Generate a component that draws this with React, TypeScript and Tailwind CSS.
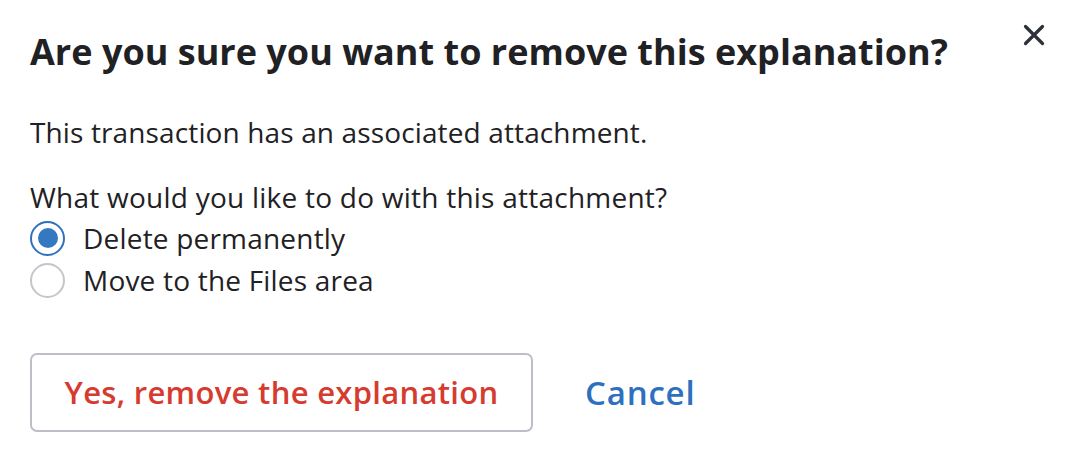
import { useState } from "react";

const font = { fontFamily: '"Open Sans", "Noto Sans", sans-serif' };

export default function App() {
  const [choice, setChoice] = useState("delete");

  const options = [
    { id: "delete", label: "Delete permanently" },
    { id: "move", label: "Move to the Files area" },
  ];

  return (
    <div className="w-[1076px] h-[460px] bg-white text-[#1f2124] relative overflow-hidden" style={font}>
      {/* close */}
      <button className="absolute left-[1022px] top-[23px] w-6 h-6 flex items-center justify-center" aria-label="Close">
        <svg width="22" height="22" viewBox="0 0 22 22" fill="none">
          <path d="M2.5 2.5L19.5 19.5M19.5 2.5L2.5 19.5" stroke="#2b3136" strokeWidth="3.2" strokeLinecap="round" />
        </svg>
      </button>

      <div className="pl-[30px] pt-[30px]">
        <h1 className="text-[36px] leading-[44px] font-bold tracking-[0.02px]">
          Are you sure you want to remove this explanation?
        </h1>

        <p className="mt-[40px] text-[28px] leading-[36px] tracking-[0.13px]">
          This transaction has an associated attachment.
        </p>

        <p className="mt-[29px] text-[28px] leading-[36px] tracking-[0.24px]">
          What would you like to do with this attachment?
        </p>

        <div className="mt-[2px] flex flex-col">
          {options.map((o) => {
            const on = choice === o.id;
            return (
              <label key={o.id} className="flex items-center h-[42px] cursor-pointer" onClick={() => setChoice(o.id)}>
                <span
                  className={
                    on
                      ? "w-[35px] h-[35px] rounded-full border-2 border-[#2f71c1] flex items-center justify-center"
                      : "w-[35px] h-[35px] rounded-full border-2 border-[#c3c6cb] flex items-center justify-center"
                  }
                >
                  {on && <span className="w-[20px] h-[20px] rounded-full bg-[#3478c2]" />}
                </span>
                <span className="ml-[18px] text-[28px] leading-[42px] tracking-[0.2px]">{o.label}</span>
              </label>
            );
          })}
        </div>

        <div className="mt-[52px] flex items-center">
          <button className="w-[503px] h-[79px] rounded-[7px] border-2 border-[#bcc0c6] text-[#d63b30] text-[31px] font-semibold tracking-[0.3px] flex items-center justify-center">
            Yes, remove the explanation
          </button>
          <button className="ml-[52px] text-[#2e70c0] text-[33px] font-semibold tracking-[0.8px]">Cancel</button>
        </div>
      </div>
    </div>
  );
}
